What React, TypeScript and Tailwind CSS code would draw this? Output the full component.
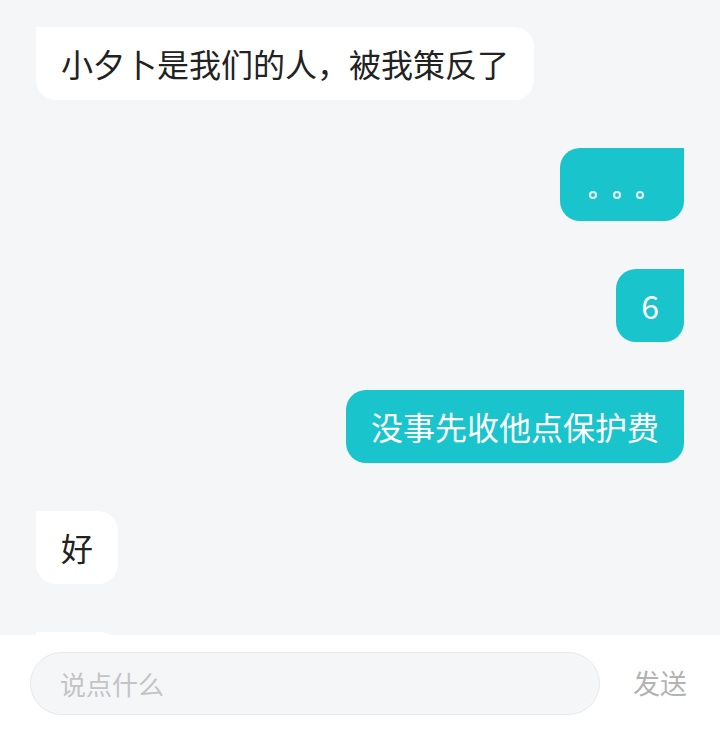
import React from "react";

type Msg = { side: "left" | "right"; text: string; dots?: boolean; ghost?: boolean };

const msgs: Msg[] = [
  { side: "left", text: "小夕卜是我们的人，被我策反了" },
  { side: "right", text: "。。。", dots: true },
  { side: "right", text: "6" },
  { side: "right", text: "没事先收他点保护费" },
  { side: "left", text: "好" },
  { side: "left", text: "", ghost: true },
];

const font = { fontFamily: '"Noto Sans CJK SC", "Noto Sans", sans-serif' };

export default function App() {
  return (
    <div className="w-[720px] h-[731px] flex flex-col bg-[#f5f6f8] overflow-hidden" style={font}>
      <div className="h-[635px] overflow-hidden shrink-0">
        <div className="flex flex-col gap-[48px] pt-[27px] px-[36px]">
          {msgs.map((m, i) =>
            m.side === "left" ? (
              <div key={i} className="flex justify-start">
                {m.ghost ? (
                  <div className="bg-white w-[84px] h-[73px] rounded-[20px] rounded-tl-none" />
                ) : (
                  <div className="bg-white text-[#222222] text-[32px] leading-[45px] px-[25px] py-[14px] rounded-[20px] rounded-tl-none whitespace-nowrap">
                    {m.text}
                  </div>
                )}
              </div>
            ) : (
              <div key={i} className="flex justify-end">
                {m.dots ? (
                  <div className="bg-[#19c4cd] w-[124px] h-[73px] rounded-[20px] rounded-tr-none flex items-start pl-[29px] pt-[43px] gap-[15.5px]" aria-label="。。。">
                    <span className="w-[8px] h-[8px] rounded-full border-2 border-[#e6fbfc]" />
                    <span className="w-[8px] h-[8px] rounded-full border-2 border-[#e6fbfc]" />
                    <span className="w-[8px] h-[8px] rounded-full border-2 border-[#e6fbfc]" />
                  </div>
                ) : (
                  <div className="bg-[#19c4cd] text-white text-[32px] leading-[45px] px-[25px] py-[14px] rounded-[20px] rounded-tr-none whitespace-nowrap">
                    {m.text}
                  </div>
                )}
              </div>
            )
          )}
        </div>
      </div>
      <div className="flex-1 bg-white flex items-center pl-[30px] pr-[33px] gap-[33px]">
        <div className="h-[63px] flex-1 rounded-full bg-[#f5f6f8] border border-[#e8e9eb] flex items-center pl-[29px] text-[26px] text-[#c4c4c4]">
          说点什么
        </div>
        <div className="text-[27px] text-[#b3b3b3]">发送</div>
      </div>
    </div>
  );
}
